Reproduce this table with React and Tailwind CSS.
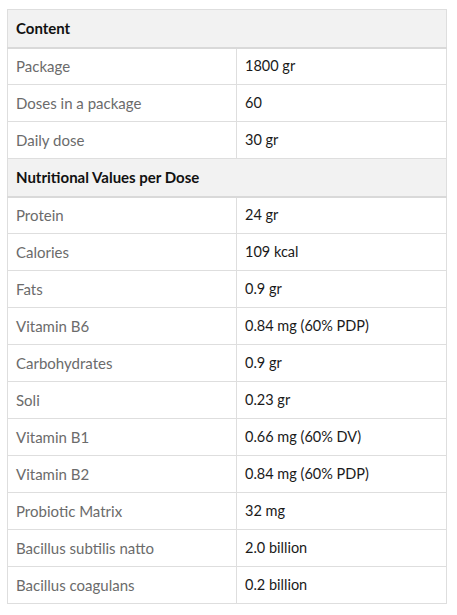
import React from "react";

const sections = [
  {
    title: "Content",
    rows: [
      ["Package", "1800 gr"],
      ["Doses in a package", "60"],
      ["Daily dose", "30 gr"],
    ],
  },
  {
    title: "Nutritional Values per Dose",
    rows: [
      ["Protein", "24 gr"],
      ["Calories", "109 kcal"],
      ["Fats", "0.9 gr"],
      ["Vitamin B6", "0.84 mg (60% PDP)"],
      ["Carbohydrates", "0.9 gr"],
      ["Soli", "0.23 gr"],
      ["Vitamin B1", "0.66 mg (60% DV)"],
      ["Vitamin B2", "0.84 mg (60% PDP)"],
      ["Probiotic Matrix", "32 mg"],
      ["Bacillus subtilis natto", "2.0 billion"],
      ["Bacillus coagulans", "0.2 billion"],
    ],
  },
];

export default function App() {
  return (
    <div className="w-[457px] h-[615px] bg-white pt-[9px] pl-[7px] font-['Lato',sans-serif]">
      <table className="w-[440px] border-collapse border border-[#dedede]">
        <tbody>
          {sections.map((section) => (
            <React.Fragment key={section.title}>
              <tr className="h-[38px] bg-[#f2f2f2] border-b-2 border-[#d9d9d9]">
                <th colSpan={2} className="text-left font-bold text-[15px] text-[#111] px-2 py-0">
                  {section.title}
                </th>
              </tr>
              {section.rows.map(([label, value]) => (
                <tr key={label} className="h-[37px] border-b border-[#dedede]">
                  <td className="w-[229px] px-2 text-[15px] text-[#6b6b6b] border-r border-[#dedede]">{label}</td>
                  <td className="px-2 text-[14.5px] text-[#1a1a1a]">{value}</td>
                </tr>
              ))}
            </React.Fragment>
          ))}
        </tbody>
      </table>
    </div>
  );
}
